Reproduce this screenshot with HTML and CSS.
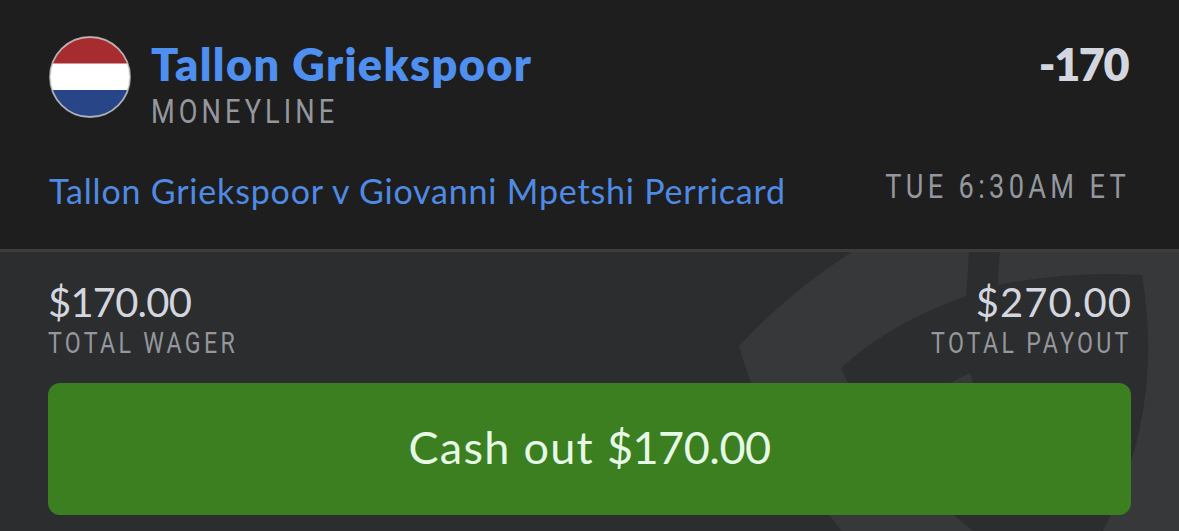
FILE: index.html
```html
<!DOCTYPE html>
<html lang="en">
  <head>
    <meta charset="UTF-8" />
    <meta name="viewport" content="width=device-width, initial-scale=1.0" />
    <title>Bet slip</title>
    <link rel="stylesheet" href="styles.css">
  </head>
  <body>
    <div class="bet">
      <div class="selection">
        <svg class="flag" viewBox="0 0 82 82">
          <clipPath id="circle"><circle cx="41" cy="41" r="40" /></clipPath>
          <g clip-path="url(#circle)">
            <rect width="82" height="82" fill="#fff" />
            <rect width="82" height="27.5" fill="#a72c2f" />
            <rect y="54" width="82" height="28" fill="#284687" />
          </g>
          <circle cx="41" cy="41" r="40" fill="none" stroke="#d0d0d4" stroke-opacity=".75" stroke-width="1.8" />
        </svg>
        <div class="pick">
          <h1>Tallon Griekspoor</h1>
          <span class="label market">MONEYLINE</span>
        </div>
        <span class="odds">-170</span>
      </div>
      <div class="event">
        <a class="match">Tallon Griekspoor v Giovanni Mpetshi Perricard</a>
        <span class="label time">TUE 6:30AM ET</span>
      </div>
    </div>
    <div class="summary">
      <svg class="watermark" viewBox="720 252 459 279">
        <path d="M852 252Q789 292 739 346Q765 440 842 531H973Q878 455 841 368Q888 324 966 296Q968 274 969 252Z" />
        <path d="M1000 252Q998 270 998 285Q1067 271 1142 275Q1165 410 1103 531H1179V252Z" />
        <path d="M930 395Q948 383 970 373Q973 377 973 395Z" />
      </svg>
      <div class="totals">
        <div class="total">
          <span class="amount wager">$170.00</span>
          <span class="label small">TOTAL WAGER</span>
        </div>
        <div class="total right">
          <span class="amount payout">$270.00</span>
          <span class="label small">TOTAL PAYOUT</span>
        </div>
      </div>
      <button class="cashout">Cash out <span>$170.00</span></button>
    </div>
  </body>
</html>
```
FILE: styles.css
```css
* {
  box-sizing: border-box;
}

body {
  margin: 0;
  height: 531px;
  overflow: hidden;
  background-color: #1e1e1e;
  font-family: "Lato", sans-serif;
  color: #d3d6de;
}

.bet {
  height: 249px;
  padding: 36px 49px 0;
}

.selection {
  display: flex;
  height: 130px;
}

.flag {
  width: 82px;
  height: 82px;
  margin-right: 20px;
}

.pick {
  display: flex;
  flex-direction: column;
  align-items: flex-start;
}

h1,
.odds {
  margin: 0;
  font-size: 45px;
  font-weight: 800;
  line-height: 56px;
}

h1 {
  color: #4f8ff0;
  letter-spacing: 1.4px;
}

.odds {
  margin-left: auto;
  margin-right: 2px;
  letter-spacing: -1.5px;
}

.label {
  color: #94979d;
  font-family: "Roboto", sans-serif;
  font-size: 34px;
  line-height: 38px;
  letter-spacing: 4px;
  white-space: nowrap;
  transform: scaleX(0.8);
  transform-origin: left;
}

.market {
  letter-spacing: 5.1px;
}

.event {
  display: flex;
  justify-content: space-between;
}

.match {
  color: #4f8ae4;
  font-size: 34px;
  line-height: 50px;
  letter-spacing: 0.81px;
  white-space: nowrap;
}

.time {
  line-height: 40px;
  letter-spacing: 5.4px;
  transform-origin: right;
}

.summary {
  position: relative;
  height: 282px;
  padding: 28px 48px 0;
  border-top: 3px solid #3d3d3f;
  background-color: #2c2d2f;
}

.watermark {
  position: absolute;
  top: 0;
  right: 0;
  width: 459px;
  height: 279px;
  fill: #37383a;
}

.totals {
  position: relative;
  display: flex;
  justify-content: space-between;
  height: 103px;
}

.total {
  display: flex;
  flex-direction: column;
}

.right {
  align-items: flex-end;
}

.amount {
  font-size: 40px;
  line-height: 44px;
}

.wager {
  letter-spacing: -0.8px;
}

.payout {
  margin-right: -1px;
  letter-spacing: 1.1px;
}

.small {
  font-size: 29px;
  line-height: 38px;
  letter-spacing: 4.1px;
}

.right .small {
  margin-right: -1px;
  transform-origin: right;
}

.cashout {
  position: relative;
  display: block;
  width: 100%;
  height: 132px;
  padding: 0 0 4px;
  border: none;
  border-radius: 12px;
  background-color: #3b7f21;
  color: #e6f8e6;
  font-family: inherit;
  font-size: 45px;
  letter-spacing: 1.3px;
}

.cashout span {
  letter-spacing: -0.5px;
}
```
